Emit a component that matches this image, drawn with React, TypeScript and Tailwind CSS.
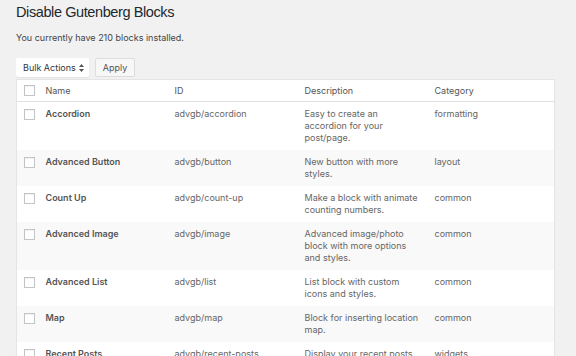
import React from "react";

type Block = {
  name: string;
  id: string;
  description: string;
  category: string;
};

const blocks: Block[] = [
  { name: "Accordion", id: "advgb/accordion", description: "Easy to create an accordion for your post/page.", category: "formatting" },
  { name: "Advanced Button", id: "advgb/button", description: "New button with more styles.", category: "layout" },
  { name: "Count Up", id: "advgb/count-up", description: "Make a block with animate counting numbers.", category: "common" },
  { name: "Advanced Image", id: "advgb/image", description: "Advanced image/photo block with more options and styles.", category: "common" },
  { name: "Advanced List", id: "advgb/list", description: "List block with custom icons and styles.", category: "common" },
  { name: "Map", id: "advgb/map", description: "Block for inserting location map.", category: "common" },
  { name: "Recent Posts", id: "advgb/recent-posts", description: "Display your recent posts in a beautiful way.", category: "widgets" },
];

const cols = "grid grid-cols-[22px_129px_130px_130px_1fr]";

function Checkbox() {
  return <span className="block h-[11px] w-[11px] border border-[#c3c4c7] bg-white shadow-[inset_0_1px_1px_rgba(0,0,0,0.06)]" />;
}

export default function App() {
  return (
    <div
      className="h-[356px] w-[576px] overflow-hidden bg-[#f1f1f1] text-[#555]"
      style={{ fontFamily: "Inter, 'Liberation Sans', sans-serif" }}
    >
      <div className="px-4 pt-[2px]">
        <h1
          className="text-[14.5px] leading-[20px] font-normal tracking-[-0.4px] text-[#23282d]"
          style={{ fontFamily: "'Liberation Sans', Arial, sans-serif" }}
        >
          Disable Gutenberg Blocks
        </h1>
        <p className="mt-[9px] text-[9px] leading-[13px] text-[#444]">You currently have 210 blocks installed.</p>

        <div className="mt-[14px] flex gap-[6px]">
          <div className="flex h-[19px] w-[73px] items-center justify-between rounded-[2px] bg-white pl-[7px] pr-[5px] text-[9px] text-[#32373c] shadow-[0_1px_1px_rgba(0,0,0,0.06)]">
            <span>Bulk Actions</span>
            <svg width="5" height="8" viewBox="0 0 5 8" className="fill-[#555]">
              <path d="M2.5 0 L5 3 H0 Z M2.5 8 L5 5 H0 Z" />
            </svg>
          </div>
          <button className="h-[19px] w-[40px] rounded-[2px] border border-[#ddd] bg-[#f7f7f7] text-[9px] text-[#555]">
            Apply
          </button>
        </div>

        <div className="mt-[2px] w-[539px] border border-[#e5e5e5] bg-white text-[9px] leading-[12px] shadow-[0_1px_1px_rgba(0,0,0,0.04)]">
          <div className={`${cols} h-[22px] items-center border-b border-[#e1e1e1] text-[#555]`}>
            <div className="pl-[7px]"><Checkbox /></div>
            <div className="px-[6.5px]">Name</div>
            <div className="px-[6.5px]">ID</div>
            <div className="px-[6.5px]">Description</div>
            <div className="px-[6.5px]">Category</div>
          </div>
          {blocks.map((b, i) => (
            <div key={b.id} className={`${cols} py-[6px] ${i % 2 === 1 ? "bg-[#f9f9f9]" : "bg-white"}`}>
              <div className="pl-[7px] pt-[1px]"><Checkbox /></div>
              <div className="px-[6.5px] font-semibold text-[#555]">{b.name}</div>
              <div className="px-[6.5px] text-[#666]">{b.id}</div>
              <div className="px-[6.5px] text-[#666]">{b.description}</div>
              <div className="px-[6.5px] text-[#666]">{b.category}</div>
            </div>
          ))}
        </div>
      </div>
    </div>
  );
}
